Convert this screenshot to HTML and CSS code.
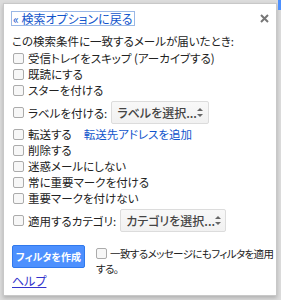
FILE: index.html
```html
<!DOCTYPE html>
<html lang="ja">
<head>
    <meta charset="UTF-8">
    <title>フィルタを作成</title>
    <link rel="stylesheet" href="styles.css">
</head>
<body>
    <div class="filter-panel">
        <div class="panel-top">
            <a href="#" class="back-link">« 検索オプションに戻る</a>
            <svg class="close-btn" width="9" height="9" viewBox="0 0 9 9">
                <path d="M1 1L8 8M8 1L1 8" stroke="#777" stroke-width="2"/>
            </svg>
        </div>
        <p class="intro">この検索条件に一致するメールが届いたとき:</p>

        <div class="actions">
            <label class="row"><span class="box"></span>受信トレイをスキップ (アーカイブする)</label>
            <label class="row"><span class="box"></span>既読にする</label>
            <label class="row"><span class="box"></span>スターを付ける</label>
            <div class="row select-row">
                <span class="box"></span>ラベルを付ける:
                <span class="fake-select">ラベルを選択...<span class="arrows"></span></span>
            </div>
            <div class="row forward-row">
                <span class="box"></span>転送する
                <a href="#" class="add-link">転送先アドレスを追加</a>
            </div>
            <label class="row"><span class="box"></span>削除する</label>
            <label class="row"><span class="box"></span>迷惑メールにしない</label>
            <label class="row"><span class="box"></span>常に重要マークを付ける</label>
            <label class="row"><span class="box"></span>重要マークを付けない</label>
            <div class="row select-row">
                <span class="box"></span>適用するカテゴリ:
                <span class="fake-select cat">カテゴリを選択...<span class="arrows"></span></span>
            </div>
        </div>

        <div class="footer">
            <button class="create-btn">フィルタを作成</button>
            <div class="also-apply"><span class="box"></span>一致するメッセージにもフィルタを適用する。</div>
        </div>
        <a href="#" class="help-link">ヘルプ</a>
    </div>
</body>
</html>
```

FILE: styles.css
```css
* {
    margin: 0;
    padding: 0;
    box-sizing: border-box;
}

body {
    background: #dcdcdc;
    font-family: "Noto Sans CJK JP", "Noto Sans", sans-serif;
    font-size: 11.5px;
    font-feature-settings: "palt";
    color: #222;
    width: 281px;
    height: 300px;
    overflow: hidden;
    position: relative;
}

body::after {
    content: '';
    position: absolute;
    right: 0;
    top: 0;
    width: 3px;
    height: 10px;
    background: #4d90fe;
}

.filter-panel {
    margin: 3px;
    width: 274px;
    height: 293px;
    background: #fff;
    border: 1px solid #c8c8c8;
    box-shadow: 0 2px 4px rgba(0, 0, 0, 0.2);
    padding: 6px 8px 0 8px;
}

.panel-top {
    display: flex;
    justify-content: space-between;
    align-items: center;
    height: 16px;
}

.back-link {
    color: #15c;
    text-decoration: none;
    outline: 1px solid #9ab8e6;
    padding: 0 1px;
    line-height: 13px;
    font-size: 12px;
}

.close-btn {
    margin-right: -1px;
    margin-top: 1px;
}

.intro {
    margin-top: 7px;
    line-height: 16px;
    height: 16px;
}

.actions {
    margin-top: 1px;
}

.row {
    display: flex;
    align-items: center;
    height: 16px;
    line-height: 14px;
    white-space: nowrap;
}

.box {
    display: inline-block;
    width: 11px;
    height: 11px;
    border: 1px solid #ababab;
    border-radius: 2px;
    background: #f7f7f7;
    margin: 0 4px 0 1px;
    flex-shrink: 0;
}

.select-row {
    height: 23px;
    margin: 3px 0 2px;
}

.fake-select {
    display: inline-flex;
    align-items: center;
    height: 23px;
    margin-left: 4px;
    padding: 0 5px 0 5px;
    background: linear-gradient(#f8f8f8, #f1f1f1);
    border: 1px solid #dcdcdc;
    border-radius: 2px;
    color: #444;
    font-size: 12px;
    font-weight: 500;
    width: 98px;
}

.fake-select.cat {
    width: 106px;
}

.arrows {
    margin-left: auto;
    width: 6px;
    height: 9px;
    position: relative;
}

.arrows::before,
.arrows::after {
    content: '';
    position: absolute;
    left: 0;
    border-left: 3px solid transparent;
    border-right: 3px solid transparent;
}

.arrows::before {
    top: 0;
    border-bottom: 3px solid #666;
}

.arrows::after {
    bottom: 0;
    border-top: 3px solid #666;
}

.add-link {
    color: #15c;
    text-decoration: none;
    margin-left: 12px;
}

.footer {
    display: flex;
    align-items: flex-start;
    margin-top: 13px;
    height: 28px;
}

.create-btn {
    background: #4d90fe;
    border: 1px solid #3079ed;
    border-radius: 2px;
    color: #fff;
    font-family: inherit;
    font-size: 10px;
    font-feature-settings: "palt";
    font-weight: bold;
    width: 73px;
    height: 23px;
    flex-shrink: 0;
}

.also-apply {
    margin-left: 11px;
    margin-right: -6px;
    margin-top: 1px;
    font-size: 10.5px;
    letter-spacing: -0.6px;
    line-height: 15px;
}

.also-apply .box {
    margin: 0 3px 0 0;
    vertical-align: -1px;
}

.help-link {
    display: inline-block;
    color: #33c;
    text-decoration: underline;
    line-height: 14px;
    font-size: 12px;
}
```
